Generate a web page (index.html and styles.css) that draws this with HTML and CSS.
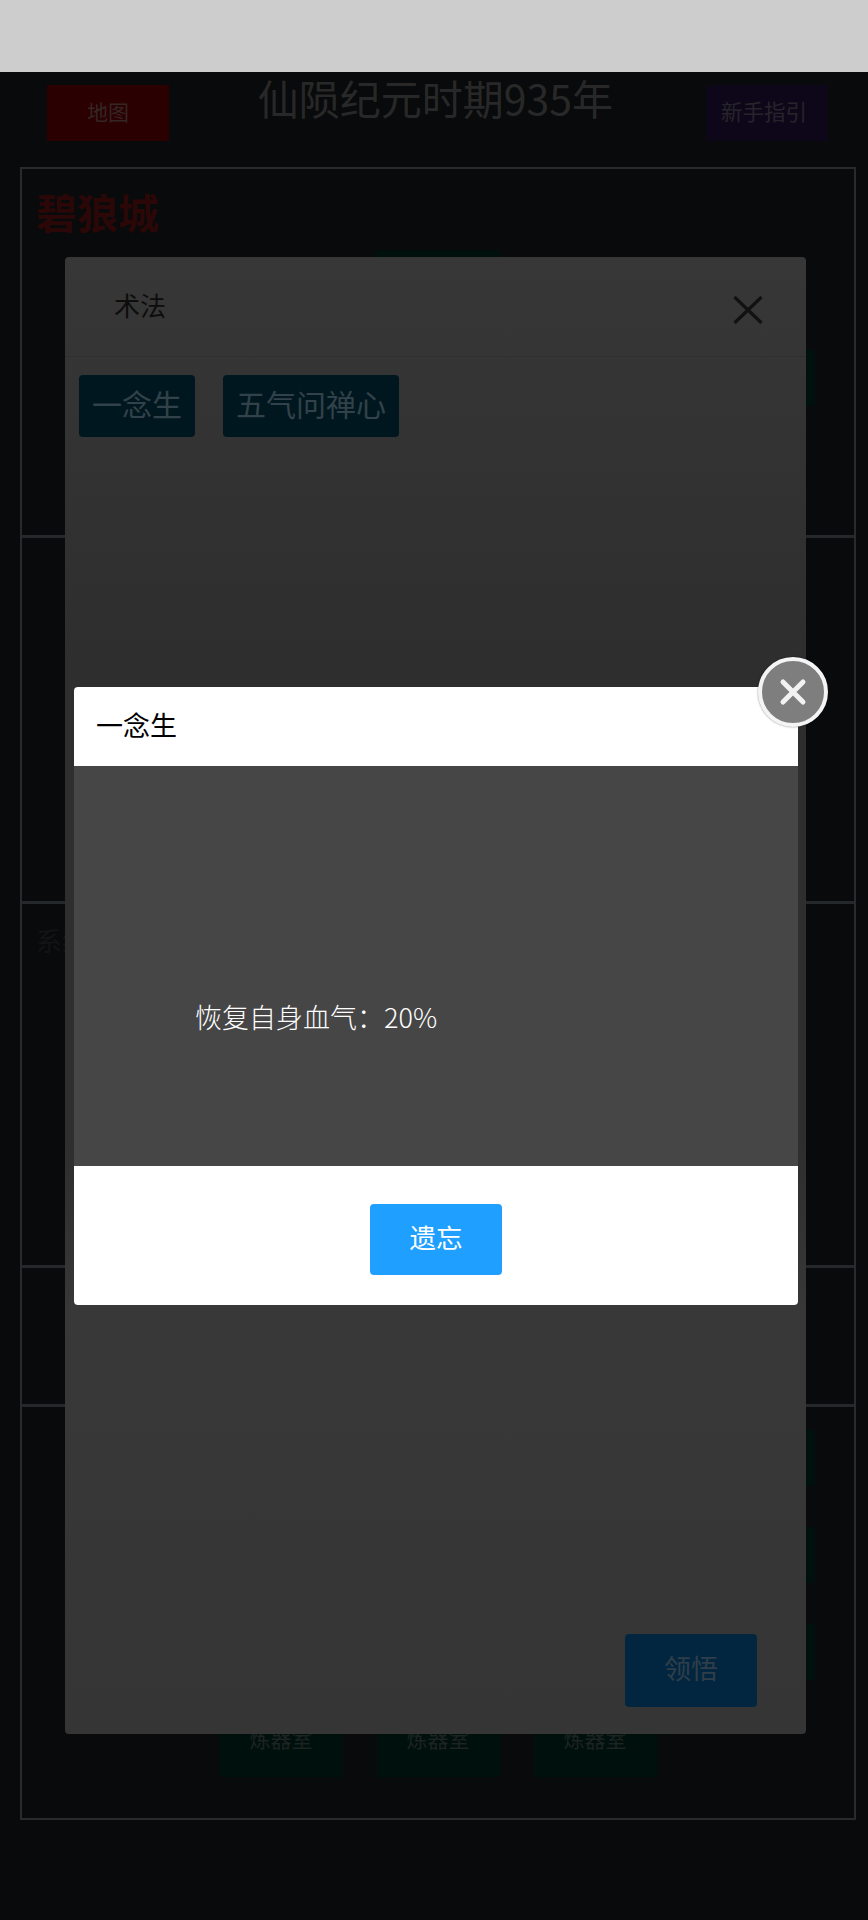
FILE: index.html
```html
<!DOCTYPE html>
<html lang="zh-CN">
<head>
<meta charset="utf-8">
<title>仙陨纪元时期935年</title>
<link rel="stylesheet" href="styles.css">
</head>
<body>
<div class="statusbar"></div>
<header class="topnav">
  <div class="navbtn navbtn-map">地图</div>
  <h1 class="era">仙陨纪元时期935年</h1>
  <div class="navbtn navbtn-guide">新手指引</div>
</header>
<main class="panels">
  <section class="panel panel-city">
    <h2 class="city">碧狼城</h2>
    <div class="room-row room-row-center"><div class="room"></div></div>
    <div class="room-row room-row-end room-row-low"><div class="room"></div></div>
  </section>
  <section class="panel panel-mid"></section>
  <section class="panel panel-mid panel-sys"><div class="sys">系统</div></section>
  <section class="panel panel-short"></section>
  <section class="panel panel-rooms">
    <div class="room-row room-row-end"><div class="room"></div></div>
    <div class="room-row room-row-end"><div class="room"></div></div>
    <div class="room-row room-row-end"><div class="room"></div></div>
    <div class="room-row room-row-center">
      <div class="room">炼器室</div>
      <div class="room">炼器室</div>
      <div class="room">炼器室</div>
    </div>
  </section>
</main>

<div class="sheet">
  <div class="sheet-head">
    <span class="sheet-title">术法</span>
    <svg class="sheet-close" viewBox="0 0 30 28" width="30" height="28" aria-hidden="true">
      <path d="M1.5 1 L28.5 27 M28.5 1 L1.5 27" fill="none" stroke="#111" stroke-width="3.2"/>
    </svg>
  </div>
  <div class="skills">
    <div class="skill">一念生</div>
    <div class="skill">五气问禅心</div>
  </div>
  <div class="sheet-foot"><div class="learn">领悟</div></div>
</div>

<div class="dialog">
  <div class="dialog-head">一念生</div>
  <div class="dialog-body">恢复自身血气：20%</div>
  <div class="dialog-foot"><div class="forget">遗忘</div></div>
  <div class="dialog-close">
    <svg viewBox="0 0 30 30" width="30" height="30" aria-hidden="true">
      <path d="M5 5 L25 25 M25 5 L5 25" fill="none" stroke="#f2f2f2" stroke-width="5" stroke-linecap="round"/>
    </svg>
  </div>
</div>
</body>
</html>
```
FILE: styles.css
```css
* { box-sizing: border-box; }

html, body { margin: 0; padding: 0; }

body {
  position: relative;
  width: 868px;
  height: 1920px;
  overflow: hidden;
  background: #090a0b;
  font-family: "Noto Sans CJK SC", "Noto Sans", sans-serif;
}

.statusbar {
  height: 72px;
  background: #cdcdcd;
}

.topnav {
  display: flex;
  justify-content: space-between;
  align-items: flex-start;
  height: 95px;
  padding: 13px 40px 0 47px;
}

.navbtn {
  width: 122px;
  height: 56px;
  line-height: 52px;
  text-align: center;
  font-size: 21px;
}

.navbtn-map { background: #2a0000; color: #352626; }
.navbtn-guide { background: #0e071a; color: #26242b; font-size: 21.5px; padding-right: 6px; }

.era {
  margin: -12px 4px 0 0;
  font-size: 41px;
  font-weight: 400;
  line-height: 48px;
  color: #282828;
}

.panels {
  width: 836px;
  margin-left: 20px;
  border: 2px solid #282a2b;
}

.panel { border-bottom: 3px solid #25282a; }
.panel:last-child { border-bottom: 0; }

.panel-city { height: 369px; padding: 18px 39px 0 14px; }
.panel-mid { height: 366px; }
.panel-sys { height: 364px; }
.panel-short { height: 139px; }
.panel-rooms { height: 411px; padding: 23px 39px 0 0; display: flex; flex-direction: column; gap: 41px; }

.city {
  margin: 0 0 15px;
  font-size: 41px;
  font-weight: 700;
  line-height: 48px;
  color: #2b0707;
}

.panel-city .room-row-center { padding-left: 24px; }

.sys {
  padding: 20px 0 0 14px;
  font-size: 26px;
  line-height: 32px;
  color: #131413;
}

.room-row { display: flex; gap: 34px; }
.room-row-center { justify-content: center; }
.room-row-end { justify-content: flex-end; }
.room-row-low { margin-top: 44px; }

.panel-rooms .room-row-center { padding-left: 39px; }

.room {
  width: 123px;
  height: 56px;
  padding-top: 2px;
  background: #00100d;
  color: #1d2321;
  font-size: 21px;
  line-height: 30px;
  text-align: center;
}

.sheet {
  position: absolute;
  left: 65px;
  top: 257px;
  width: 741px;
  height: 1477px;
  display: flex;
  flex-direction: column;
  background: linear-gradient(#373737 0, #2e2e2e 27%, #2e2e2e 60%, #383838 72%, #353535 100%);
  border-radius: 4px;
}

.sheet-head {
  display: flex;
  justify-content: space-between;
  align-items: center;
  height: 100px;
  padding: 0 43px 0 49px;
  border-bottom: 1px solid #2f2f2f;
}

.sheet-title {
  font-size: 26px;
  line-height: 34px;
  margin-top: -4px;
  color: #0d0d0d;
}

.sheet-close { margin-top: 6px; }

.skills {
  display: flex;
  gap: 28px;
  padding: 18px 14px 0;
}

.skill {
  height: 62px;
  padding: 0 13px;
  line-height: 56px;
  font-size: 30px;
  color: #31424a;
  background: #01171f;
  border-radius: 4px;
}

.sheet-foot {
  display: flex;
  justify-content: flex-end;
  margin-top: auto;
  padding: 0 49px 27px 0;
}

.learn {
  width: 132px;
  height: 73px;
  line-height: 68px;
  text-align: center;
  font-size: 27px;
  color: #2f3e49;
  background: #022640;
  border-radius: 4px;
}

.dialog {
  position: absolute;
  left: 74px;
  top: 687px;
  width: 724px;
  height: 618px;
  display: flex;
  flex-direction: column;
  background: #fff;
  border-radius: 4px;
}

.dialog-head {
  height: 79px;
  padding-left: 22px;
  font-size: 27px;
  line-height: 76px;
  color: #000;
}

.dialog-body {
  height: 400px;
  padding: 231px 0 0 121px;
  background: #464646;
  color: #fff;
  font-size: 27px;
  font-weight: 300;
  line-height: 40px;
}

.dialog-foot {
  display: flex;
  justify-content: center;
  padding-top: 38px;
}

.forget {
  width: 132px;
  height: 71px;
  line-height: 66px;
  text-align: center;
  font-size: 26.5px;
  color: #fff;
  background: #1f9fff;
  border-radius: 4px;
}

.dialog-close {
  position: absolute;
  top: -30px;
  right: -30px;
  width: 70px;
  height: 70px;
  display: flex;
  align-items: center;
  justify-content: center;
  background: #7e7e7e;
  border: 4px solid #f4f4f4;
  border-radius: 50%;
  box-shadow: 0 0 2px rgba(0, 0, 0, 0.5);
}
```
